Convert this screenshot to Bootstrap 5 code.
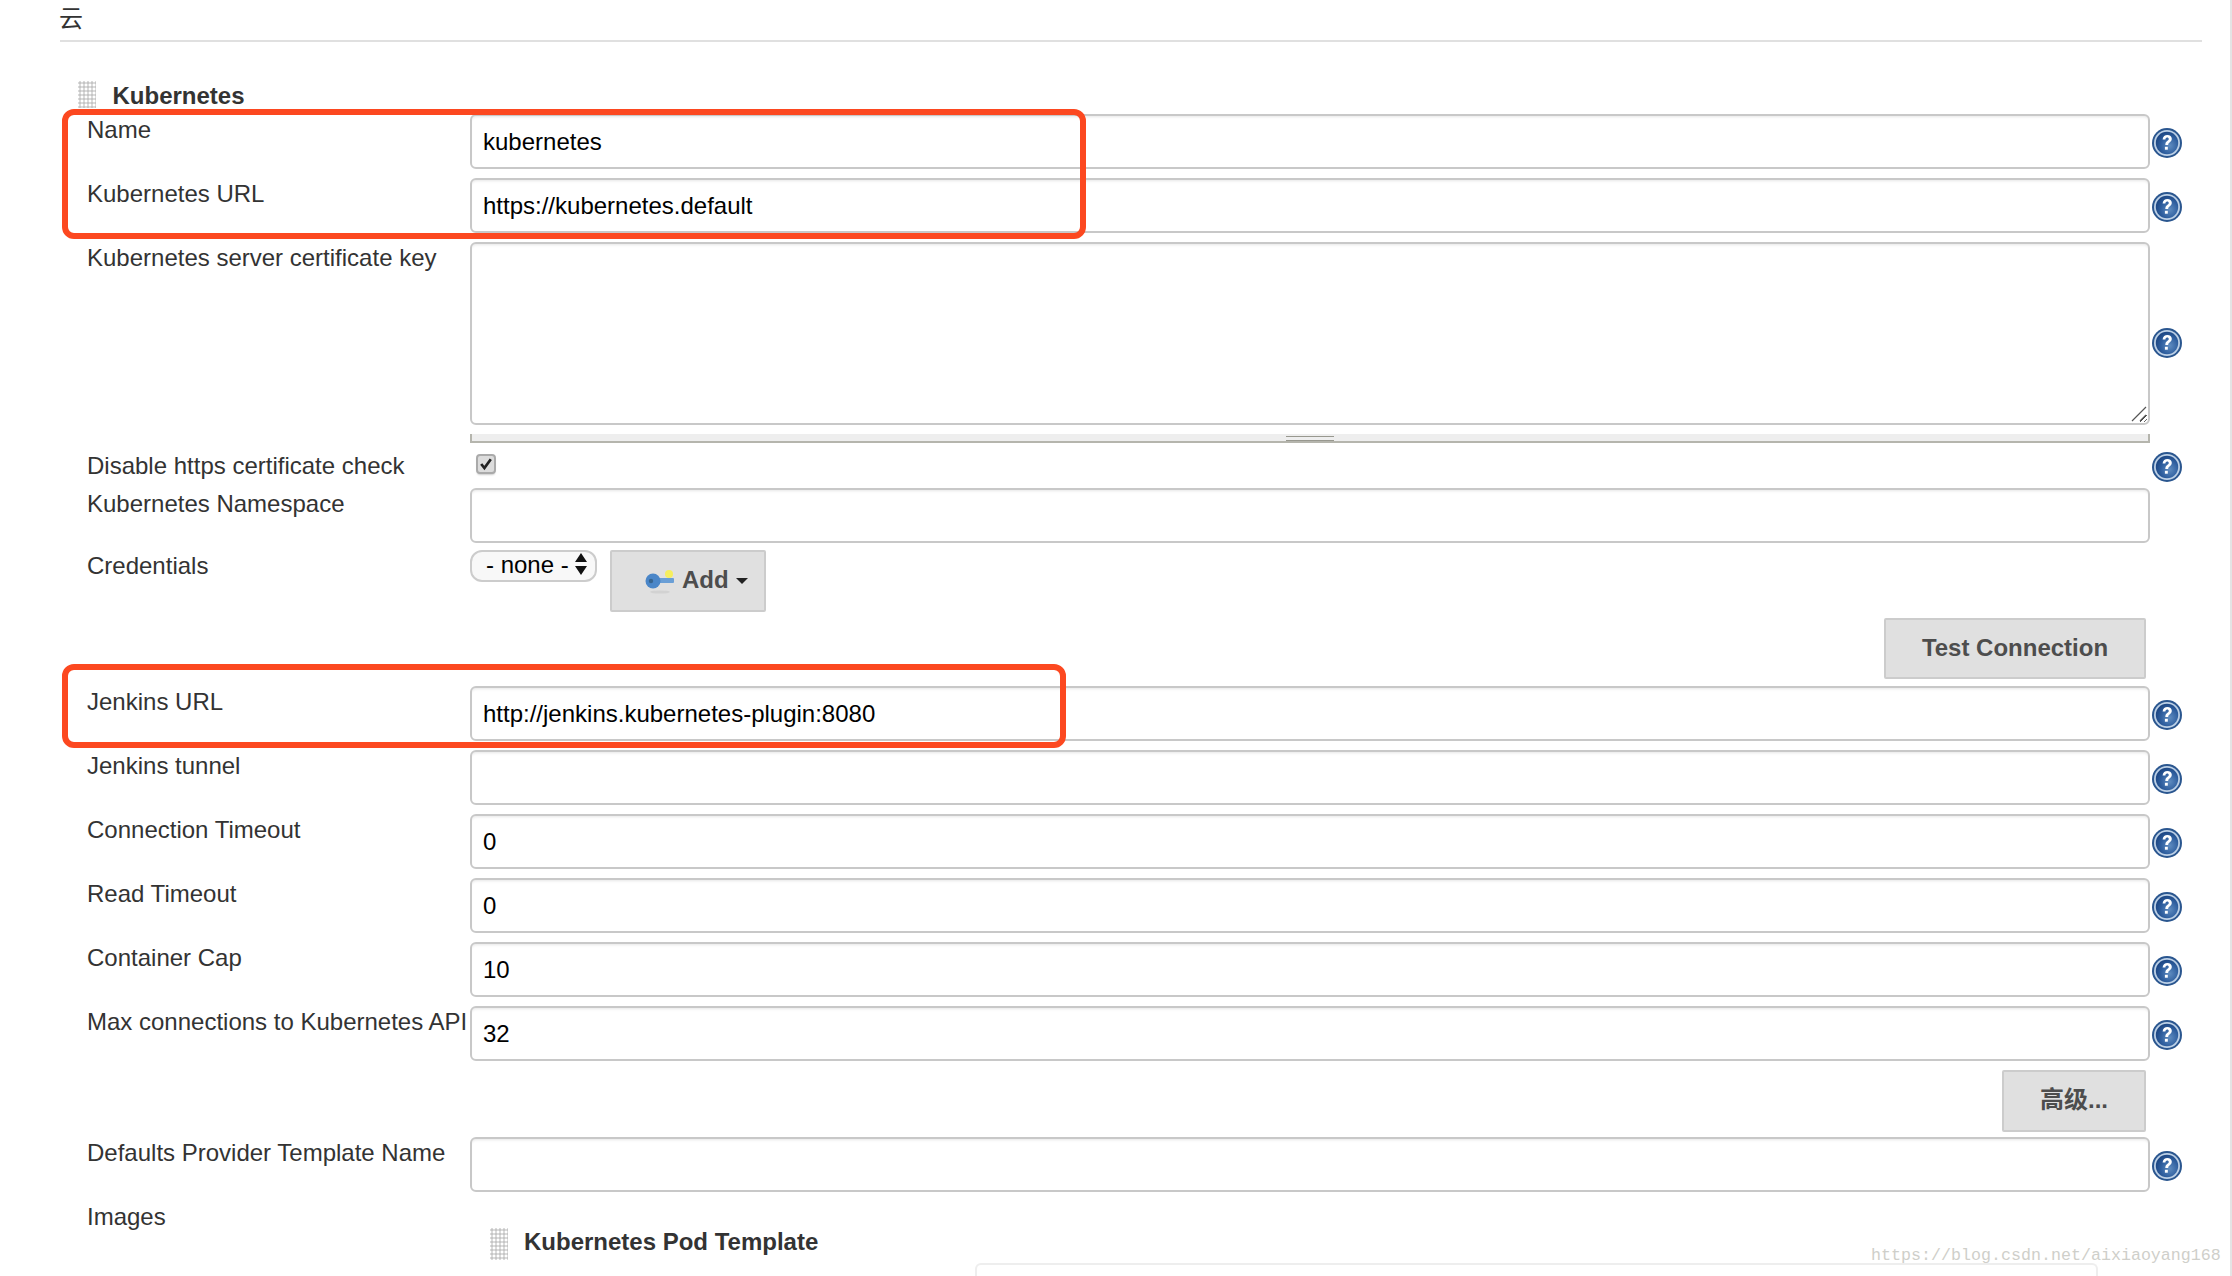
<!DOCTYPE html>
<html lang="zh">
<head>
<meta charset="utf-8">
<title>云 - Kubernetes</title>
<link href="https://cdn.jsdelivr.net/npm/bootstrap@5.3.0/dist/css/bootstrap.min.css" rel="stylesheet">
<style>
html, body { height: 100%; }
body { background: #fff; font-family: "Liberation Sans", "Noto Sans CJK SC", sans-serif; color: #333; font-size: 24px; overflow: hidden; }
.sheet { position: relative; height: 1276px; overflow: hidden; padding: 0 28px 0 60px; border-right: 2px solid #e4e4e4; }
.cloud-head { height: 42px; line-height: 38px; border-bottom: 2px solid #e0e0e0; font-size: 24px; text-indent: -1px; }
.block-title { height: 33px; margin-top: 39px; padding-left: 18px; line-height: 30px; font-weight: 700; font-size: 24px; gap: 16.5px; }
.grip { flex: 0 0 18px; width: 18px; height: 27px; background-color: #fff;
  background-image: radial-gradient(circle at 2px 2px, #c6c6c6 1.3px, #e4e4e4 1.7px, transparent 2px); background-size: 4px 4px; }
.cfg-row { padding-left: 27px; margin-bottom: 9px; height: 55px; }
.cfg-label { flex: 0 0 383px; width: 383px; line-height: 31px; white-space: nowrap; margin: 0; color: #333; }
.cfg-field { flex: 0 0 1680px; width: 1680px; }
.cfg-help { flex: 0 0 30px; width: 30px; height: 30px; margin: 2px 0 0 2px; align-self: center; display: block; }
.row-area .cfg-help, .row-check .cfg-help { margin-top: 0; }
input.cfg-input, textarea.cfg-input { height: 55px; padding: 0 11px; font-size: 24px; color: #000; border: 2px solid #c8c8c8; border-radius: 6px;
  box-shadow: inset 0 3px 3px -2px #e6e6e6; font-family: "Liberation Sans", sans-serif; }
textarea.cfg-input { height: 183px; min-height: 183px; display: block; background-repeat: no-repeat; background-position: right 1px bottom 1px; background-size: 16px 16px;
  background-image: url("data:image/svg+xml,%3Csvg xmlns='http://www.w3.org/2000/svg' viewBox='0 0 16 16'%3E%3Cpath d='M1 15L15 1M9 15l6-6' fill='none' stroke='%23555' stroke-width='1.2'/%3E%3C/svg%3E"); }
.grippie { height: 9px; margin-top: 9px; background: #eee; border: solid #b5b5ad; border-width: 0 2px 2px; display: flex; justify-content: center; padding-top: 2px; }
.grippie-mark { width: 48px; height: 5px; border: solid #98988f; border-width: 1.5px 0; }
.row-area { height: 201px; margin-bottom: 11px; }
.row-check { height: 25px; }
.row-check .cfg-label { line-height: 24px; }
input.cfg-check, input.cfg-check:checked { width: 20px; height: 20px; margin: 0 0 0 6px; border: 2px solid #aaa; border-radius: 4px; background-color: #dcdcdc; float: none; box-shadow: 0 2px 2px -1px #ccc;
  background-image: url("data:image/svg+xml,%3Csvg xmlns='http://www.w3.org/2000/svg' viewBox='0 0 20 20'%3E%3Cpath d='M4 10l4 5 8-11' fill='none' stroke='%23222' stroke-width='3.4'/%3E%3C/svg%3E"); }
.row-cred { height: 62px; margin-bottom: 6px; }
.row-namespace { margin-bottom: 7px; }
.cred-tools { gap: 13px; }
select.cfg-select { width: 127px; height: 32px; padding: 0 0 4px 14px; line-height: 26px; font-size: 24px; color: #000; border: 2px solid #ccc; border-radius: 12px; background-color: #f8f8f8; background-position: right 8px top 1px; background-size: 12px 22px; box-shadow: none;
  background-image: url("data:image/svg+xml,%3Csvg xmlns='http://www.w3.org/2000/svg' viewBox='0 0 12 22'%3E%3Cpath d='M6 0l6 9H0zM6 22l6-9H0z' fill='%23111'/%3E%3C/svg%3E"); }
.gray-btn { background: #e0e0e0; border: 2px solid #ccc; border-radius: 2px; color: #4d4d4d; font-weight: 700; font-size: 24px; line-height: 28px; padding: 0 0 2px; }
.add-btn { width: 156px; height: 62px; gap: 7px; padding-left: 33px; }
.add-caret { width: 0; height: 0; border: 6.5px solid transparent; border-top-color: #222; border-bottom: 0; margin: 2px 0 0 0; }
.test-btn { width: 262px; height: 61px; }
.adv-btn { width: 144px; height: 62px; }
.btn-line { padding-right: 3px; width: 2089px; justify-content: flex-end; }
.btn-line-test { height: 61px; margin-bottom: 7px; }
.btn-line-adv { height: 62px; margin-bottom: 5px; }
.pod-title { margin-top: 27px; padding-left: 20px; gap: 16px; height: 35px; font-weight: 700; line-height: 28px; }
.pod-title .grip { height: 32px; }
.row-images { height: 70px; margin-bottom: 0; }
.pod-next { height: 20px; margin: 0 0 0 505px; width: 1123px; border: 2px solid #eee; border-bottom: 0; border-radius: 6px 6px 0 0; }
.callout { position: absolute; border: 6px solid #fc4820; border-radius: 12px; pointer-events: none; }
.callout-a { left: 62px; top: 109px; width: 1024px; height: 130px; }
.callout-b { left: 62px; top: 664px; width: 1004px; height: 84px; }
.mark-text { position: absolute; left: 1871px; top: 1246px; font-family: "Liberation Mono", monospace; font-size: 16.67px; line-height: 20px; color: #cfcfca; white-space: nowrap; }
</style>
</head>
<body>
<svg width="0" height="0" class="position-absolute">
  <defs>
    <radialGradient id="helpFill" cx="62%" cy="62%" r="65%">
      <stop offset="0" stop-color="#5f8cc0"/>
      <stop offset="0.6" stop-color="#2f5f9f"/>
      <stop offset="1" stop-color="#1c4683"/>
    </radialGradient>
    <symbol id="helpIcon" viewBox="0 0 30 30">
      <circle cx="15" cy="15" r="15" fill="#2a568f"/>
      <circle cx="15" cy="15" r="13" fill="#bcd0e6"/>
      <circle cx="15" cy="15" r="11.2" fill="url(#helpFill)"/>
      <path d="M10.6 11.4c.3-3 2.3-4.4 4.7-4.4 2.7 0 4.5 1.6 4.5 3.8 0 1.9-1.1 2.8-2.2 3.7-1 .8-1.4 1.3-1.4 2.6h-2.9c0-2.2.7-3.1 1.9-4.1 1-.8 1.6-1.3 1.6-2.1 0-.9-.7-1.5-1.6-1.5-1 0-1.7.7-1.8 2z" fill="#fff"/>
      <rect x="12.9" y="18.8" width="2.9" height="2.9" fill="#fff"/>
    </symbol>
  </defs>
</svg>
<main class="sheet">
  <div class="cloud-head">云</div>

  <div class="block-title d-flex"><span class="grip"></span><span>Kubernetes</span></div>

  <div class="cfg-row d-flex">
    <label class="cfg-label" for="f1">Name</label>
    <div class="cfg-field"><input id="f1" class="form-control cfg-input" value="kubernetes"></div>
    <svg class="cfg-help"><use href="#helpIcon"/></svg>
  </div>
  <div class="cfg-row d-flex">
    <label class="cfg-label" for="f2">Kubernetes URL</label>
    <div class="cfg-field"><input id="f2" class="form-control cfg-input" value="https://kubernetes.default"></div>
    <svg class="cfg-help"><use href="#helpIcon"/></svg>
  </div>
  <div class="cfg-row row-area d-flex">
    <label class="cfg-label" for="f3">Kubernetes server certificate key</label>
    <div class="cfg-field">
      <textarea id="f3" class="form-control cfg-input"></textarea>
      <div class="grippie"><span class="grippie-mark"></span></div>
    </div>
    <svg class="cfg-help"><use href="#helpIcon"/></svg>
  </div>
  <div class="cfg-row row-check d-flex">
    <label class="cfg-label" for="f4">Disable https certificate check</label>
    <div class="cfg-field d-flex align-items-start"><input id="f4" type="checkbox" class="form-check-input cfg-check" checked></div>
    <svg class="cfg-help"><use href="#helpIcon"/></svg>
  </div>
  <div class="cfg-row row-namespace d-flex">
    <label class="cfg-label" for="f5">Kubernetes Namespace</label>
    <div class="cfg-field"><input id="f5" class="form-control cfg-input"></div>
  </div>
  <div class="cfg-row row-cred d-flex">
    <label class="cfg-label" for="f6">Credentials</label>
    <div class="cfg-field d-flex align-items-start cred-tools">
      <select id="f6" class="form-select cfg-select"><option>- none -</option></select>
      <button type="button" class="btn gray-btn add-btn d-flex align-items-center">
        <svg width="30" height="30" viewBox="0 0 30 30" aria-hidden="true">
          <ellipse cx="15" cy="27" rx="10" ry="1.6" fill="#d2d2d2"/>
          <rect x="11" y="13" width="18" height="5" rx="1" fill="#6a9fd6"/>
          <circle cx="8" cy="16" r="7.5" fill="#4a86c8"/>
          <circle cx="6" cy="16" r="2.2" fill="#36648f"/>
          <circle cx="24" cy="9" r="4" fill="#f6ef5e"/>
        </svg>
        <span>Add</span><span class="add-caret"></span>
      </button>
    </div>
  </div>
  <div class="btn-line btn-line-test d-flex"><button type="button" class="btn gray-btn test-btn">Test Connection</button></div>

  <div class="cfg-row d-flex">
    <label class="cfg-label" for="f7">Jenkins URL</label>
    <div class="cfg-field"><input id="f7" class="form-control cfg-input" value="http://jenkins.kubernetes-plugin:8080"></div>
    <svg class="cfg-help"><use href="#helpIcon"/></svg>
  </div>
  <div class="cfg-row d-flex">
    <label class="cfg-label" for="f8">Jenkins tunnel</label>
    <div class="cfg-field"><input id="f8" class="form-control cfg-input"></div>
    <svg class="cfg-help"><use href="#helpIcon"/></svg>
  </div>
  <div class="cfg-row d-flex">
    <label class="cfg-label" for="f9">Connection Timeout</label>
    <div class="cfg-field"><input id="f9" class="form-control cfg-input" value="0"></div>
    <svg class="cfg-help"><use href="#helpIcon"/></svg>
  </div>
  <div class="cfg-row d-flex">
    <label class="cfg-label" for="f10">Read Timeout</label>
    <div class="cfg-field"><input id="f10" class="form-control cfg-input" value="0"></div>
    <svg class="cfg-help"><use href="#helpIcon"/></svg>
  </div>
  <div class="cfg-row d-flex">
    <label class="cfg-label" for="f11">Container Cap</label>
    <div class="cfg-field"><input id="f11" class="form-control cfg-input" value="10"></div>
    <svg class="cfg-help"><use href="#helpIcon"/></svg>
  </div>
  <div class="cfg-row d-flex">
    <label class="cfg-label" for="f12">Max connections to Kubernetes API</label>
    <div class="cfg-field"><input id="f12" class="form-control cfg-input" value="32"></div>
    <svg class="cfg-help"><use href="#helpIcon"/></svg>
  </div>
  <div class="btn-line btn-line-adv d-flex"><button type="button" class="btn gray-btn adv-btn">高级...</button></div>
  <div class="cfg-row d-flex">
    <label class="cfg-label" for="f13">Defaults Provider Template Name</label>
    <div class="cfg-field"><input id="f13" class="form-control cfg-input"></div>
    <svg class="cfg-help"><use href="#helpIcon"/></svg>
  </div>
  <div class="cfg-row row-images d-flex">
    <div class="cfg-label">Images</div>
    <div class="cfg-field">
      <div class="pod-title d-flex"><span class="grip"></span><span>Kubernetes Pod Template</span></div>
      <div class="pod-next"></div>
    </div>
  </div>

  <div class="callout callout-a"></div>
  <div class="callout callout-b"></div>
  <div class="mark-text">https://blog.csdn.net/aixiaoyang168</div>
</main>
<script src="https://cdn.jsdelivr.net/npm/bootstrap@5.3.0/dist/js/bootstrap.bundle.min.js"></script>
</body>
</html>
